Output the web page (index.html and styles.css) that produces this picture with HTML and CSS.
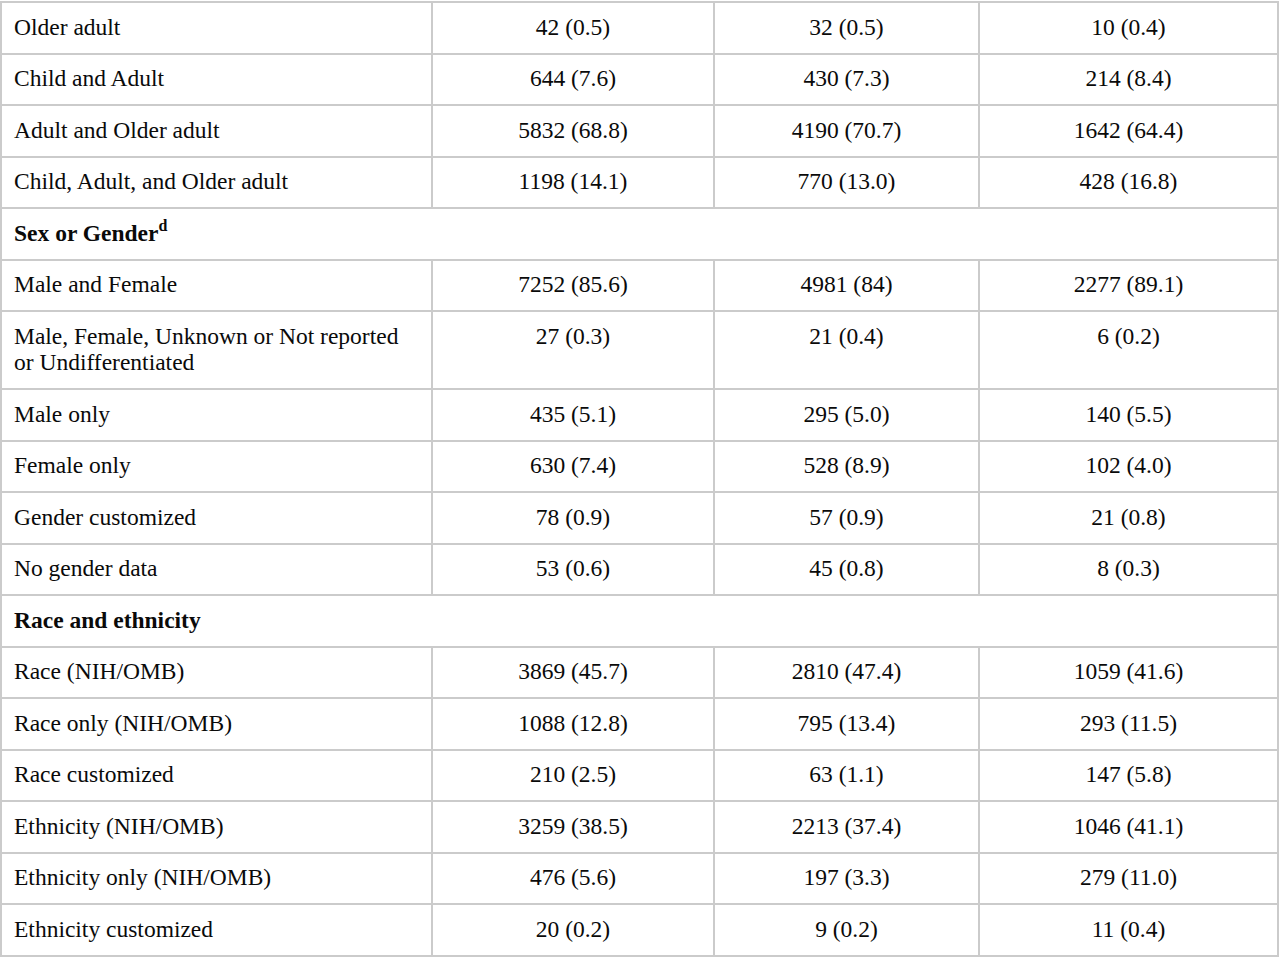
FILE: index.html
```html
<!DOCTYPE html>
<html>
<head>
<meta charset="utf-8">
<link rel="stylesheet" href="styles.css">
</head>
<body>
<table class="data">
  <colgroup>
    <col class="c-label">
    <col class="c-total">
    <col class="c-a">
    <col class="c-b">
  </colgroup>
  <tbody>
    <tr><td>Older adult</td><td class="num">42 (0.5)</td><td class="num">32 (0.5)</td><td class="num">10 (0.4)</td></tr>
    <tr><td>Child and Adult</td><td class="num">644 (7.6)</td><td class="num">430 (7.3)</td><td class="num">214 (8.4)</td></tr>
    <tr><td>Adult and Older adult</td><td class="num">5832 (68.8)</td><td class="num">4190 (70.7)</td><td class="num">1642 (64.4)</td></tr>
    <tr><td>Child, Adult, and Older adult</td><td class="num">1198 (14.1)</td><td class="num">770 (13.0)</td><td class="num">428 (16.8)</td></tr>
    <tr class="section"><td colspan="4">Sex or Gender<sup>d</sup></td></tr>
    <tr><td>Male and Female</td><td class="num">7252 (85.6)</td><td class="num">4981 (84)</td><td class="num">2277 (89.1)</td></tr>
    <tr><td>Male, Female, Unknown or Not reported or Undifferentiated</td><td class="num">27 (0.3)</td><td class="num">21 (0.4)</td><td class="num">6 (0.2)</td></tr>
    <tr><td>Male only</td><td class="num">435 (5.1)</td><td class="num">295 (5.0)</td><td class="num">140 (5.5)</td></tr>
    <tr><td>Female only</td><td class="num">630 (7.4)</td><td class="num">528 (8.9)</td><td class="num">102 (4.0)</td></tr>
    <tr><td>Gender customized</td><td class="num">78 (0.9)</td><td class="num">57 (0.9)</td><td class="num">21 (0.8)</td></tr>
    <tr><td>No gender data</td><td class="num">53 (0.6)</td><td class="num">45 (0.8)</td><td class="num">8 (0.3)</td></tr>
    <tr class="section"><td colspan="4">Race and ethnicity</td></tr>
    <tr><td>Race (NIH/OMB)</td><td class="num">3869 (45.7)</td><td class="num">2810 (47.4)</td><td class="num">1059 (41.6)</td></tr>
    <tr><td>Race only (NIH/OMB)</td><td class="num">1088 (12.8)</td><td class="num">795 (13.4)</td><td class="num">293 (11.5)</td></tr>
    <tr><td>Race customized</td><td class="num">210 (2.5)</td><td class="num">63 (1.1)</td><td class="num">147 (5.8)</td></tr>
    <tr><td>Ethnicity (NIH/OMB)</td><td class="num">3259 (38.5)</td><td class="num">2213 (37.4)</td><td class="num">1046 (41.1)</td></tr>
    <tr><td>Ethnicity only (NIH/OMB)</td><td class="num">476 (5.6)</td><td class="num">197 (3.3)</td><td class="num">279 (11.0)</td></tr>
    <tr><td>Ethnicity customized</td><td class="num">20 (0.2)</td><td class="num">9 (0.2)</td><td class="num">11 (0.4)</td></tr>
  </tbody>
</table>
</body>
</html>
```

FILE: styles.css
```css
html, body {
  margin: 0;
  padding: 0;
  background: #ffffff;
}

body {
  padding-top: 1px;
  font-family: "Liberation Serif", "Times New Roman", serif;
  font-size: 23.5px;
  color: #0a0a0a;
}

.data {
  border-collapse: collapse;
  table-layout: fixed;
  width: 1279px;
}

.c-label { width: 431px; }
.c-total { width: 282px; }
.c-a { width: 265px; }
.c-b { width: 299px; }

.data td {
  border: 2px solid #cbcbcb;
  padding: 10.5px 12px 12.5px;
  line-height: 26.5px;
  vertical-align: top;
  text-align: left;
}

.data td.num {
  text-align: center;
}

.section td {
  font-weight: bold;
}

.section sup {
  font-size: 16px;
  line-height: 0;
  vertical-align: 10px;
}
```
